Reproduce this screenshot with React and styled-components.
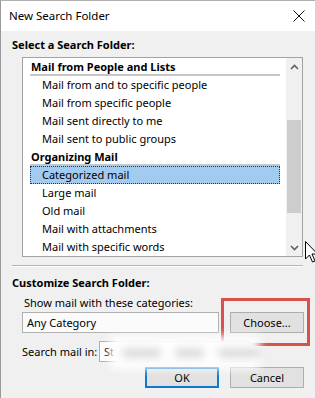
import React from "react";
import styled, { createGlobalStyle } from "styled-components";

const Global = createGlobalStyle`
  html, body { margin: 0; padding: 0; background: #f0f0f0; }
  body { font-family: "Noto Sans", "Open Sans", sans-serif; font-size: 11px; color: #000; }
  * { box-sizing: border-box; }
`;

const Window = styled.div`
  position: relative;
  width: 315px;
  height: 398px;
  overflow: hidden;
  background: #f0f0f0;
  border-left: 1px solid #9a9a9a;
  border-top: 1px solid #b0b0b0;
  display: flex;
  flex-direction: column;
`;

const TitleBar = styled.div`
  height: 30px;
  flex: none;
  background: #fff;
  display: flex;
  align-items: center;
  justify-content: space-between;
  padding: 0 10px 0 8px;
`;

const Title = styled.span`
  font-size: 11.5px;
  line-height: 16px;
`;

const Body = styled.div`
  display: flex;
  flex-direction: column;
  padding: 6px 12px 0 11px;
`;

const SectionLabel = styled.div`
  font-weight: 700;
  line-height: 16px;
  height: 16px;
  white-space: nowrap;
`;

const ListBox = styled.div`
  margin: 4px 0 0 10px;
  width: 281px;
  height: 200px;
  border: 1px solid #a3a3a3;
  background: #fff;
  display: flex;
`;

const Rows = styled.div`
  flex: 1;
  padding: 0 6px 0 7px;
  overflow: hidden;
`;

const GroupRow = styled.div`
  height: 18px;
  line-height: 17px;
  padding-left: 1px;
  font-weight: 700;
  border-bottom: 2px solid #c6c6c6;
  white-space: nowrap;
`;

const ItemRow = styled.div`
  height: 18px;
  line-height: 18px;
  padding-left: 12px;
  white-space: nowrap;
  background: ${(p) => (p.$selected ? "#a3cbf0" : "transparent")};
  outline: ${(p) => (p.$selected ? "1px dotted #333" : "none")};
  outline-offset: -1px;
`;

const ScrollBar = styled.div`
  width: 16px;
  background: #f0f0f0;
  display: flex;
  flex-direction: column;
  align-items: stretch;
`;

const ArrowBox = styled.div`
  height: 17px;
  display: flex;
  align-items: center;
  justify-content: center;
`;

const Track = styled.div`
  flex: 1;
  display: flex;
  flex-direction: column;
`;

const Thumb = styled.div`
  margin: 45px 1px 0 1px;
  height: 93px;
  background: #cdcdcd;
`;

const Divider = styled.div`
  margin-top: 8px;
  height: 2px;
  border-top: 1px solid #b4b4b4;
  border-bottom: 1px solid #fff;
  width: 291px;
`;

const SectionLabel2 = styled(SectionLabel)`
  margin-top: 8px;
`;

const FieldLabel = styled.div`
  margin: 4px 0 0 12px;
  line-height: 16px;
  white-space: nowrap;
`;

const FieldRow = styled.div`
  position: relative;
  margin: 1px 0 0 10px;
  display: flex;
  gap: 11px;
  height: 21px;
`;

const TextField = styled.div`
  width: ${(p) => p.$w}px;
  height: 21px;
  flex: none;
  border: 1px solid #b0b0b0;
  background: #fbfbfb;
  padding-left: 4px;
  line-height: 19px;
  white-space: nowrap;
  overflow: hidden;
`;

const Button = styled.div`
  width: 74px;
  height: 21px;
  flex: none;
  background: #e1e1e1;
  border: ${(p) => (p.$default ? "2px solid #0f79cf" : "1px solid #adadad")};
  display: flex;
  align-items: center;
  justify-content: center;
  line-height: 16px;
`;

const Highlight = styled.div`
  position: absolute;
  left: 199px;
  top: -14px;
  width: 89px;
  height: 48px;
  border: 3px solid #d8514b;
  pointer-events: none;
`;

const SearchRow = styled.div`
  position: relative;
  margin: 8px 0 0 10px;
  display: flex;
  align-items: center;
  gap: 4px;
  height: 21px;
`;

const SearchLabel = styled.span`
  width: 73px;
  flex: none;
  line-height: 16px;
  white-space: nowrap;
`;

const BlurPatch = styled.div`
  position: absolute;
  left: 88px;
  top: -5px;
  width: 150px;
  height: 33px;
  background: #fefefe;
  filter: blur(4px);
  display: flex;
  align-items: center;
  padding-left: 12px;
  gap: 14px;
`;

const Smudge = styled.span`
  display: block;
  height: 8px;
  width: ${(p) => p.$w}px;
  background: #d4d4d4;
  border-radius: 4px;
`;

const ButtonRow = styled.div`
  margin: 5px 0 0 133px;
  display: flex;
  gap: 11px;
`;

const Cursor = styled.svg`
  position: absolute;
  left: 304px;
  top: 240px;
`;

const Chevron = ({ up }) => (
  <svg width="9" height="6" viewBox="0 0 9 6">
    <path
      d={up ? "M1 5 L4.5 1.5 L8 5" : "M1 1 L4.5 4.5 L8 1"}
      fill="none"
      stroke="#606060"
      strokeWidth="1.6"
    />
  </svg>
);

const CloseIcon = () => (
  <svg width="12" height="12" viewBox="0 0 12 12">
    <path d="M0.5 0.5 L11.5 11.5 M11.5 0.5 L0.5 11.5" stroke="#111" strokeWidth="1" />
  </svg>
);

const groups = [
  {
    title: "Mail from People and Lists",
    items: [
      "Mail from and to specific people",
      "Mail from specific people",
      "Mail sent directly to me",
      "Mail sent to public groups",
    ],
  },
  {
    title: "Organizing Mail",
    items: [
      "Categorized mail",
      "Large mail",
      "Old mail",
      "Mail with attachments",
      "Mail with specific words",
    ],
  },
];

export default function App() {
  return (
    <>
      <Global />
      <Window>
        <TitleBar>
          <Title>New Search Folder</Title>
          <CloseIcon />
        </TitleBar>
        <Body>
          <SectionLabel>Select a Search Folder:</SectionLabel>
          <ListBox>
            <Rows>
              {groups.map((g) => (
                <React.Fragment key={g.title}>
                  <GroupRow>{g.title}</GroupRow>
                  {g.items.map((it) => (
                    <ItemRow key={it} $selected={it === "Categorized mail"}>
                      {it}
                    </ItemRow>
                  ))}
                </React.Fragment>
              ))}
            </Rows>
            <ScrollBar>
              <ArrowBox>
                <Chevron up />
              </ArrowBox>
              <Track>
                <Thumb />
              </Track>
              <ArrowBox>
                <Chevron />
              </ArrowBox>
            </ScrollBar>
          </ListBox>
          <Divider />
          <SectionLabel2>Customize Search Folder:</SectionLabel2>
          <FieldLabel>Show mail with these categories:</FieldLabel>
          <FieldRow>
            <TextField $w={197}>Any Category</TextField>
            <Button>Choose...</Button>
            <Highlight />
          </FieldRow>
          <SearchRow>
            <SearchLabel>Search mail in:</SearchLabel>
            <TextField $w={150}>St</TextField>
            <BlurPatch>
              <Smudge $w={40} />
              <Smudge $w={30} />
              <Smudge $w={44} />
            </BlurPatch>
          </SearchRow>
          <ButtonRow>
            <Button $default>OK</Button>
            <Button>Cancel</Button>
          </ButtonRow>
        </Body>
        <Cursor width="14" height="24" viewBox="0 0 14 24">
          <path
            d="M0.5 0.5 L0.5 18 L4.5 14 L7.5 21 L10 20 L7 13 L12.5 13 Z"
            fill="#fff"
            stroke="#000"
            strokeWidth="1"
          />
        </Cursor>
      </Window>
    </>
  );
}
